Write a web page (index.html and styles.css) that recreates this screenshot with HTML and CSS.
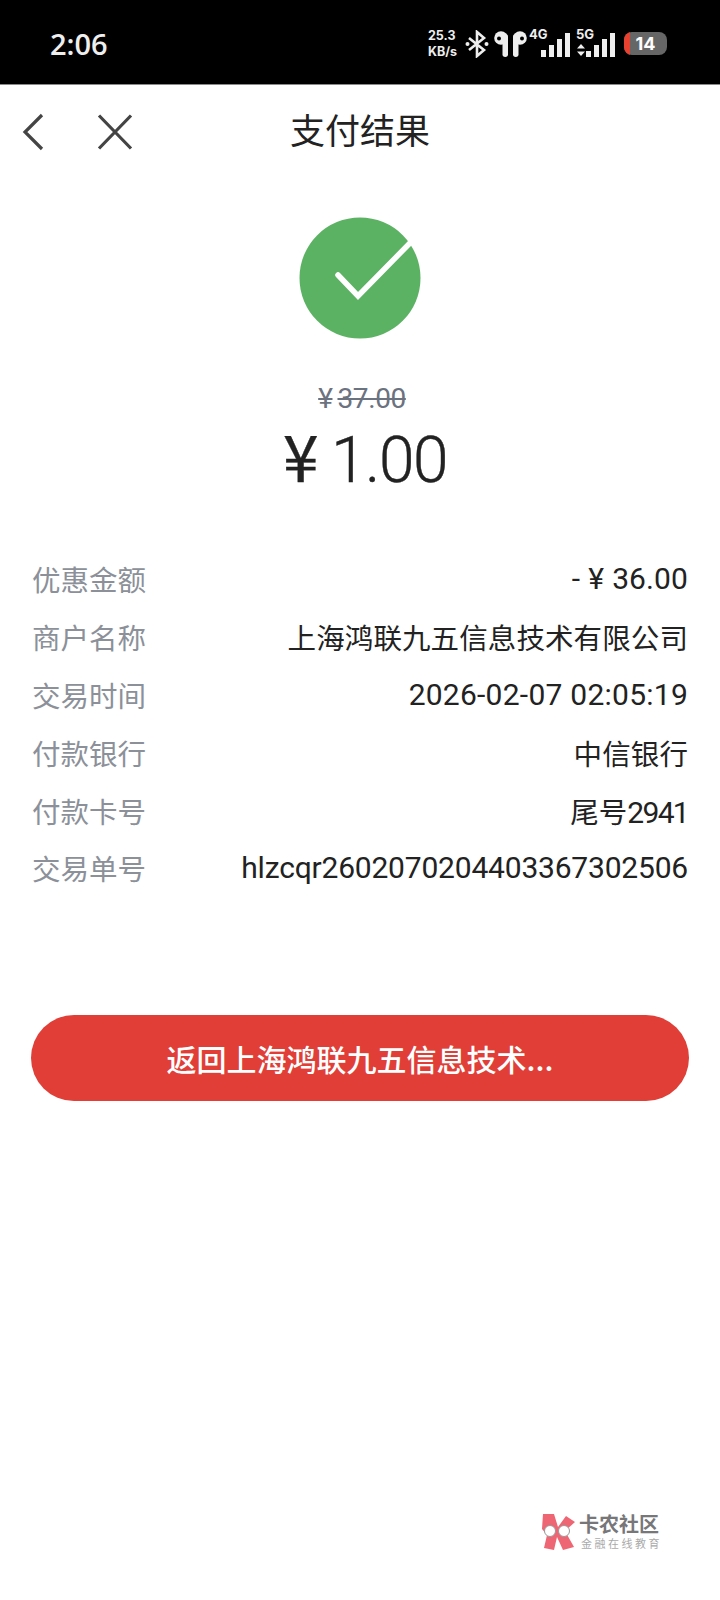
FILE: index.html
```html
<!DOCTYPE html>
<html lang="zh-CN">
<head>
    <meta charset="UTF-8">
    <meta name="viewport" content="width=device-width, initial-scale=1.0">
    <title>支付结果</title>
    <link rel="stylesheet" href="styles.css">
</head>
<body>
    <div class="status-bar">
        <span class="clock">2:06</span>
        <div class="status-icons">
            <div class="speed"><span>25.3</span><span>KB/s</span></div>
            <svg class="icon-bt" width="24" height="28" viewBox="0 0 24 28">
                <path d="M4 8 L19 20 L12 26 V2 L19 8 L4 20" fill="none" stroke="#eee" stroke-width="2.6"/>
                <circle cx="2.5" cy="14" r="2" fill="#eee"/>
                <circle cx="21.5" cy="14" r="2" fill="#eee"/>
            </svg>
            <svg class="icon-buds" width="33" height="26" viewBox="0 0 33 26">
                <circle cx="7" cy="7" r="6.8" fill="#eee"/>
                <rect x="8.5" y="3" width="5.5" height="23" rx="2.7" fill="#eee"/>
                <circle cx="5" cy="7.5" r="2" fill="#000"/>
                <circle cx="26" cy="7" r="6.8" fill="#eee"/>
                <rect x="19" y="3" width="5.5" height="23" rx="2.7" fill="#eee"/>
                <circle cx="28" cy="7.5" r="2" fill="#000"/>
            </svg>
            <div class="signal">
                <span class="net">4G</span>
                <div class="bars">
                    <i class="b1"></i><i class="b2"></i><i class="b3"></i><i class="b4"></i>
                </div>
            </div>
            <div class="signal signal-5g">
                <span class="net">5G</span>
                <svg class="arrows" width="8" height="12" viewBox="0 0 8 12">
                    <path d="M4 0 L8 4.5 H0 Z M0 7.5 H8 L4 12 Z" fill="#eee"/>
                </svg>
                <div class="bars">
                    <i class="b1"></i><i class="b2"></i><i class="b3"></i><i class="b4"></i>
                </div>
            </div>
            <div class="battery"><span class="battery-low"></span><span class="battery-num">14</span></div>
        </div>
    </div>

    <div class="nav">
        <div class="nav-left">
            <svg width="22" height="38" viewBox="0 0 22 38">
                <path d="M20 2 L3 19 L20 36" fill="none" stroke="#444" stroke-width="3.2"/>
            </svg>
            <svg width="36" height="36" viewBox="0 0 36 36">
                <path d="M2 1.5 L34 34.5 M34 1.5 L2 34.5" fill="none" stroke="#444" stroke-width="3.2"/>
            </svg>
        </div>
        <h1>支付结果</h1>
        <div></div>
    </div>

    <div class="result">
        <svg class="check" width="124" height="124" viewBox="0 0 124 124">
            <circle cx="61" cy="62" r="60.5" fill="#5bb263"/>
            <path d="M39 59 L59 80 L111 27" fill="none" stroke="#fff" stroke-width="5.5" stroke-linecap="round"/>
        </svg>
        <div class="old-price"><span class="old-yen">¥</span>37.00</div>
        <div class="price"><span class="yen">¥</span>1.00</div>
    </div>

    <div class="info">
        <div class="row"><span class="label">优惠金额</span><span class="value">-<span class="yen-small">¥</span>36.00</span></div>
        <div class="row"><span class="label">商户名称</span><span class="value cjk">上海鸿联九五信息技术有限公司</span></div>
        <div class="row"><span class="label">交易时间</span><span class="value wide">2026-02-07 02:05:19</span></div>
        <div class="row"><span class="label">付款银行</span><span class="value cjk">中信银行</span></div>
        <div class="row"><span class="label">付款卡号</span><span class="value"><span class="cjk">尾号</span><span class="tight">2941</span></span></div>
        <div class="row"><span class="label">交易单号</span><span class="value narrow">hlzcqr2602070204403367302506</span></div>
    </div>

    <div class="btn-wrap">
        <button class="back-btn">返回上海鸿联九五信息技术...</button>
    </div>

    <div class="watermark">
        <svg width="36" height="38" viewBox="0 0 36 38">
            <path d="M2 1 H13 L17 14 L25 3 L34 9 L24 18 L33 34 L22 37 L16 24 L13 37 L3 35 L6 22 L1 16 Z" fill="#ee6673"/>
            <circle cx="9" cy="18" r="5.5" fill="#fff" stroke="#999" stroke-width="1"/>
            <circle cx="23" cy="18" r="5.5" fill="#fff" stroke="#999" stroke-width="1"/>
        </svg>
        <div class="wm-text">
            <span class="wm-title">卡农社区</span>
            <span class="wm-sub">金融在线教育</span>
        </div>
    </div>
</body>
</html>
```

FILE: styles.css
```css
* {
    box-sizing: border-box;
}

body {
    margin: 0;
    width: 720px;
    height: 1600px;
    overflow: hidden;
    background: #fff;
    font-family: Roboto, "Noto Sans CJK SC", sans-serif;
    position: relative;
}

.status-bar {
    height: 85px;
    background: #000;
    border-bottom: 1px solid #8a8a8a;
    display: flex;
    align-items: center;
    justify-content: space-between;
    padding: 3px 53px 0 50px;
    color: #eee;
}

.clock {
    font-family: "Open Sans", sans-serif;
    font-size: 29px;
    font-weight: 600;
}

.status-icons {
    display: flex;
    align-items: center;
}

.speed {
    display: flex;
    flex-direction: column;
    font-family: Inter, sans-serif;
    font-size: 12.5px;
    font-weight: 700;
    line-height: 16px;
    width: 37px;
}

.icon-bt {
    margin-right: 5px;
}

.icon-buds {
    margin-right: 2px;
}

.signal {
    position: relative;
    width: 41px;
    height: 26px;
    display: flex;
    justify-content: flex-end;
    align-items: flex-end;
}

.signal-5g {
    margin-left: 6px;
    width: 39px;
}

.net {
    position: absolute;
    left: 0;
    top: -4px;
    font-family: Inter, sans-serif;
    font-size: 13px;
    font-weight: 700;
    line-height: 14px;
}

.arrows {
    position: absolute;
    left: 1px;
    bottom: 1px;
}

.bars {
    display: flex;
    align-items: flex-end;
    gap: 3px;
}

.bars i {
    display: block;
    width: 5px;
    background: #eee;
}

.b1 { height: 7px; }
.b2 { height: 12px; }
.b3 { height: 18px; }
.b4 { height: 24px; }

.signal-5g .b1 { height: 6px; }

.battery {
    position: relative;
    width: 43px;
    height: 23px;
    margin-left: 9px;
    border-radius: 8px;
    background: #666;
    overflow: hidden;
    text-align: center;
}

.battery-low {
    position: absolute;
    left: 0;
    top: 0;
    bottom: 0;
    width: 6px;
    background: #e8412f;
}

.battery-num {
    position: relative;
    font-family: Inter, sans-serif;
    font-size: 18px;
    font-weight: 700;
    line-height: 23px;
    color: #fff;
}

.nav {
    height: 90px;
    display: grid;
    grid-template-columns: 1fr auto 1fr;
    align-items: center;
    padding-left: 22px;
}

.nav-left {
    display: flex;
    align-items: center;
    gap: 53px;
    padding-top: 4px;
}

.nav h1 {
    margin: -4px 0 0 -22px;
    font-family: "Noto Sans CJK SC", sans-serif;
    font-size: 35px;
    font-weight: 400;
    color: #222;
}

.result {
    display: flex;
    flex-direction: column;
    align-items: center;
    padding-top: 41px;
}

.check {
    display: block;
    margin-left: 2px;
}

.old-price {
    margin-top: 39px;
    margin-left: 4px;
    height: 40px;
    font-size: 28px;
    line-height: 40px;
    letter-spacing: -0.4px;
    color: #6b7280;
    text-decoration: line-through;
}

.old-yen {
    margin-right: 5px;
}

.price {
    margin-top: -3px;
    padding-left: 10px;
    height: 76px;
    font-size: 64px;
    font-weight: 300;
    line-height: 76px;
    letter-spacing: -1.5px;
    color: #222;
    -webkit-text-stroke: 0.4px #222;
}

.price .yen {
    font-family: "Noto Sans CJK SC", sans-serif;
    font-weight: 400;
    margin-right: 14px;
}

.info {
    margin-top: 58px;
    padding: 0 32px;
}

.row {
    height: 57.8px;
    display: flex;
    justify-content: space-between;
    align-items: center;
    font-size: 28.5px;
}

.label {
    font-family: "Noto Sans CJK SC", sans-serif;
    color: #8b9099;
}

.value {
    color: #222;
    font-size: 30px;
    letter-spacing: 0.1px;
}

.value.wide {
    letter-spacing: 0.25px;
}

.value.narrow {
    letter-spacing: -0.2px;
}

.cjk {
    font-family: "Noto Sans CJK SC", sans-serif;
    font-size: 28.5px;
}

.tight {
    letter-spacing: -1.7px;
}

.yen-small {
    margin: 0 8px;
}

.btn-wrap {
    margin-top: 118px;
    padding: 0 31px;
}

.back-btn {
    display: block;
    width: 100%;
    height: 86px;
    border: none;
    border-radius: 43px;
    background: #e03e37;
    color: #fff;
    font-family: "Noto Sans CJK SC", sans-serif;
    font-size: 30px;
    font-weight: 500;
}

/* logo in the corner sits over the page */
.watermark {
    position: absolute;
    left: 541px;
    top: 1513px;
    display: flex;
    gap: 2px;
}

.wm-text {
    display: flex;
    flex-direction: column;
    font-family: "Noto Sans CJK SC", sans-serif;
}

.wm-title {
    font-size: 20px;
    font-weight: 700;
    line-height: 22px;
    color: #77777a;
}

.wm-sub {
    font-size: 11px;
    line-height: 16px;
    letter-spacing: 2.5px;
    color: #aaa;
    margin-left: 2px;
}
```
